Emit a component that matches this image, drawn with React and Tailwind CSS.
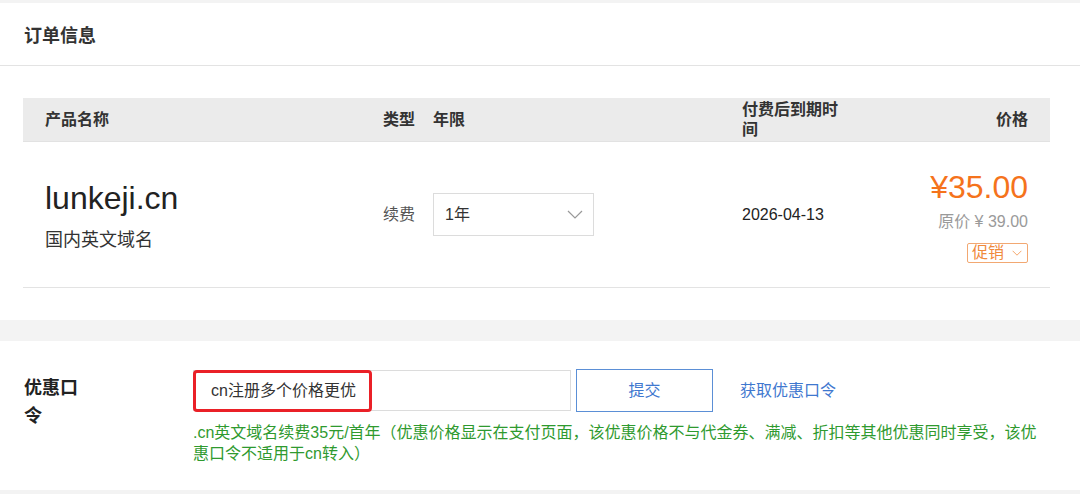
import React from "react";

const Chevron = ({ className }) => (
  <svg viewBox="0 0 16 9" className={className} fill="none" aria-hidden="true">
    <path d="M1 1l7 7 7-7" stroke="currentColor" strokeWidth="1.2" />
  </svg>
);

export default function App() {
  return (
    <div
      className="w-[1080px] h-[494px] overflow-hidden bg-[#f3f3f3] pt-[3px] text-[#333]"
      style={{ fontFamily: '"Liberation Sans", "Noto Sans CJK SC", sans-serif' }}
    >
      {/* order card */}
      <div className="bg-white h-[317px]">
        <div className="h-[63px] border-b border-[#e3e3e3] flex items-center pl-[24px]">
          <h2 className="text-[18px] font-bold leading-none pt-[3px]">订单信息</h2>
        </div>

        <div className="pt-[32px] pl-[23px] pr-[30px]">
          {/* table head */}
          <div className="flex items-center h-[44px] bg-[#ebebeb] border-b border-[#e2e2e2] text-[16px] font-bold leading-[20px]">
            <div className="w-[360px] pl-[22px]">产品名称</div>
            <div className="w-[50px]">类型</div>
            <div className="w-[309px]">年限</div>
            <div className="w-[98px]">付费后到期时间</div>
            <div className="flex-1 text-right pr-[22px]">价格</div>
          </div>

          {/* row */}
          <div className="flex items-center h-[146px] border-b border-[#e3e3e3]">
            <div className="w-[360px] pl-[22px] pt-[2px]">
              <div className="text-[32px] leading-[38px] text-[#222]">lunkeji.cn</div>
              <div className="text-[18px] leading-[24px] mt-[11px]">国内英文域名</div>
            </div>
            <div className="w-[50px] text-[16px] text-[#555]">续费</div>
            <div className="w-[309px]">
              <div className="w-[161px] h-[43px] border border-[#dcdcdc] flex items-center justify-between pl-[11px] pr-[10px] text-[16px]">
                <span>1年</span>
                <Chevron className="w-[16px] h-[9px] text-[#999]" />
              </div>
            </div>
            <div className="w-[98px] text-[16px] text-[#222]">2026-04-13</div>
            <div className="flex-1 flex flex-col items-end pr-[22px] pt-[2px]">
              <div className="text-[32px] leading-[36px] text-[#f5731c]">¥35.00</div>
              <div className="text-[16px] leading-[22px] text-[#9a9a9a] mt-[6px]">原价 ¥ 39.00</div>
              <div className="mt-[10px] h-[20px] flex items-center gap-[8px] border border-[#f2a872] rounded-[2px] pl-[4px] pr-[5px] text-[16px] leading-none text-[#f08a3c]">
                <span>促销</span>
                <Chevron className="w-[10px] h-[6px]" />
              </div>
            </div>
          </div>
        </div>
      </div>

      {/* coupon card */}
      <div className="bg-white mt-[21px] h-[149px] pt-[28px] pl-[24px] flex">
        <div className="w-[169px] pt-[5px]">
          <div className="w-[58px] text-[18px] font-bold leading-[28px] text-[#222]">优惠口令</div>
        </div>
        <div>
          <div className="flex items-center">
            <div className="relative w-[378px] h-[41px] border border-[#dcdcdc] flex items-center pl-[17px] text-[16px] text-[#333]">
              cn注册多个价格更优
              <div className="absolute left-[-1px] top-[-1px] w-[179px] h-[42px] border-[3px] border-[#ea2027] rounded-[4px]" />
            </div>
            <button className="ml-[5px] w-[137px] h-[43px] border border-[#5b8fd6] text-[16px] text-[#3f78cf] bg-white">
              提交
            </button>
            <a className="ml-[27px] text-[16px] text-[#3f78cf]">获取优惠口令</a>
          </div>
          <p className="w-[856px] mt-[10px] text-[16px] leading-[21px] text-[#2f9a2f]">
            .cn英文域名续费35元/首年（优惠价格显示在支付页面，该优惠价格不与代金券、满减、折扣等其他优惠同时享受，该优惠口令不适用于cn转入）
          </p>
        </div>
      </div>
    </div>
  );
}
